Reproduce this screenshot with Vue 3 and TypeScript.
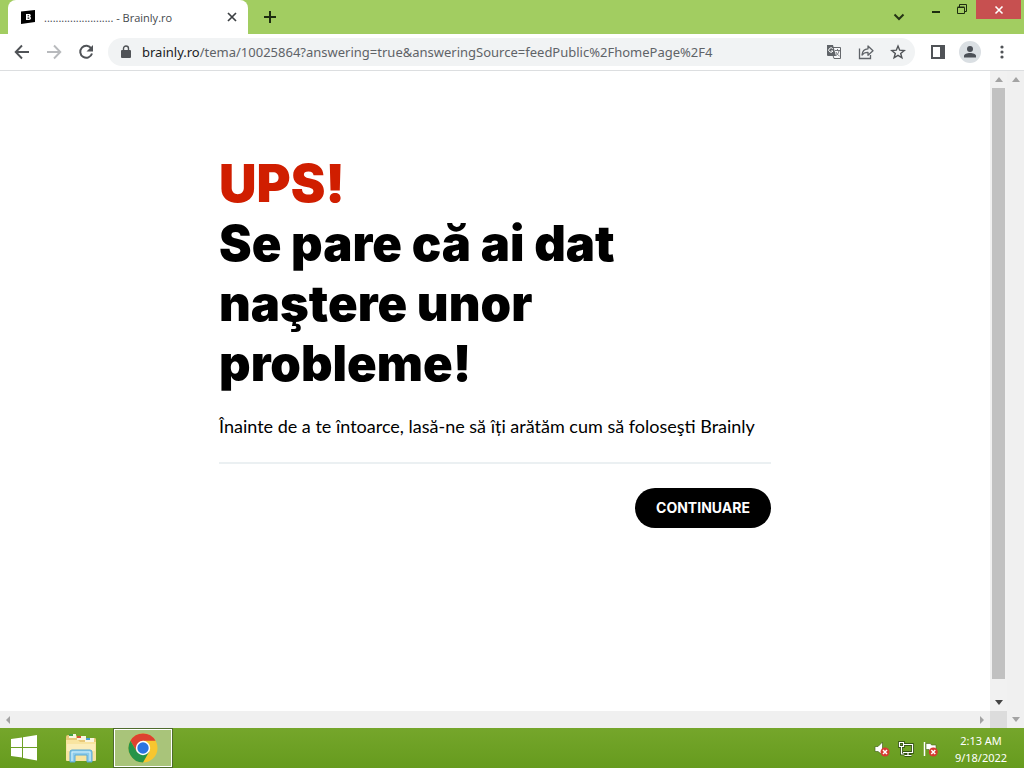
<script setup lang="ts">
import { ref } from 'vue'

const host = 'brainly.ro'
const path = '/tema/10025864?answering=true&answeringSource=feedPublic%2FhomePage%2F4'
const tabTitle = ref('........................ - Brainly.ro')
const time = '2:13 AM'
const date = '9/18/2022'
</script>

<template>
  <div class="desktop">
    <header class="tabstrip">
      <div class="tab">
        <svg class="favicon" viewBox="0 0 16 16"><path d="M1 2.500 15 1v12L1 15z" fill="#000" /><path d="M6 5h3.200c2 0 2 2.400.7 2.800 1.700.4 1.500 3.200-.8 3.200H6zm1.600 1.200v1.100h1c.8 0 .8-1.100 0-1.100zm0 2.300v1.300h1.200c.9 0 .9-1.300 0-1.300z" fill="#fff" fill-rule="evenodd" /></svg>
        <span class="tab-title">{{ tabTitle }}</span>
        <button class="icon-btn tab-close" aria-label="Close tab">
          <svg width="10" height="10" viewBox="0 0 10 10"><path d="M1 1l8 8M9 1L1 9" stroke="#3c4043" stroke-width="1.700" /></svg>
        </button>
      </div>
      <button class="icon-btn new-tab" aria-label="New tab">
        <svg width="12" height="12" viewBox="0 0 12 12"><path d="M6 0v12M0 6h12" stroke="#1d2c10" stroke-width="2" /></svg>
      </button>
      <div class="window-controls">
        <button class="icon-btn chevron" aria-label="Search tabs">
          <svg width="12" height="8" viewBox="0 0 12 8"><path d="M1.500 1.500 6 6l4.500-4.500" stroke="#253415" stroke-width="2" fill="none" /></svg>
        </button>
        <button class="icon-btn win" aria-label="Minimize">
          <svg width="10" height="12" viewBox="0 0 10 12"><path d="M1 8h8" stroke="#1d2c10" stroke-width="2" /></svg>
        </button>
        <button class="icon-btn win" aria-label="Restore">
          <svg width="10" height="12" viewBox="0 0 10 12"><path d="M.5 3.500h7v6h-7zM.5 3h7M2.500 3V.5h7v7H8" stroke="#1d2c10" fill="none" /></svg>
        </button>
        <button class="icon-btn win close" aria-label="Close">
          <svg width="10" height="10" viewBox="0 0 10 10"><path d="M1.500 1.500l7 7M8.500 1.500l-7 7" stroke="#fff" stroke-width="1.600" /></svg>
        </button>
      </div>
    </header>

    <nav class="toolbar">
      <button class="icon-btn nav" aria-label="Back">
        <svg width="16" height="16" viewBox="0 0 16 16"><path d="M15 8H2M8 1.500 1.700 8 8 14.500" stroke="#505357" stroke-width="1.900" fill="none" /></svg>
      </button>
      <button class="icon-btn nav" aria-label="Forward">
        <svg width="16" height="16" viewBox="0 0 16 16"><path d="M1 8h13M8 1.500 14.300 8 8 14.500" stroke="#b8babd" stroke-width="1.900" fill="none" /></svg>
      </button>
      <button class="icon-btn nav" aria-label="Reload">
        <svg width="16" height="16" viewBox="0 0 16 16"><path d="M13.300 4.500A6 6 0 1 0 14 9.500" stroke="#505357" stroke-width="2" fill="none" /><path d="M15 1v6.500H8.500z" fill="#505357" /></svg>
      </button>
      <div class="address">
        <svg class="lock" width="10" height="14" viewBox="0 0 10 14"><rect y="5" width="10" height="8" rx="1" fill="#505357" /><path d="M2.500 6V3.500a2.500 2.500 0 0 1 5 0V6" stroke="#505357" stroke-width="1.400" fill="none" /></svg>
        <a class="url" href="#"><span class="host">{{ host }}</span>{{ path }}</a>
        <div class="page-actions">
          <button class="icon-btn" aria-label="Translate">
            <svg width="16" height="16" viewBox="0 0 16 16"><path d="M7 3.500h7.500v11H8l-1-3" fill="#f6f7f9" stroke="#65686c" /><path d="M1 1h6l3 11H2a1 1 0 0 1-1-1z" fill="#5f6368" /><path d="M6.800 4.800A2.200 2.200 0 1 0 7 7H5" stroke="#fff" fill="none" /><path d="M9 6.500h5M11.500 5v1.500M10 8c.7 2 2 3 3.500 4M13 7c-.5 2-1.500 3.500-3 4.500" stroke="#74777b" fill="none" /></svg>
          </button>
          <button class="icon-btn" aria-label="Share">
            <svg width="16" height="16" viewBox="0 0 16 16"><path d="M1.500 4.500v10h11V11" stroke="#5f6368" stroke-width="1.300" fill="none" /><path d="M4 11c.3-4 2-6 6-6.200V2l5 4.700-5 4.500V8.300C7.500 8.200 5.500 9 4 11z" stroke="#5f6368" stroke-width="1.300" fill="none" stroke-linejoin="round" /></svg>
          </button>
          <button class="icon-btn" aria-label="Bookmark">
            <svg width="16" height="16" viewBox="0 0 16 16"><path d="m8 2 1.700 4.200 4.500.3-3.500 2.900 1.200 4.400L8 11.300l-3.900 2.500 1.200-4.400L1.800 6.500l4.500-.3z" stroke="#505357" stroke-width="1.400" fill="none" /></svg>
          </button>
        </div>
      </div>
      <div class="browser-actions">
        <button class="icon-btn" aria-label="Side panel">
          <svg width="14" height="14" viewBox="0 0 14 14"><path d="M0 0h14v14H0zm2 2v10h7V2z" fill="#505357" fill-rule="evenodd" /></svg>
        </button>
        <button class="icon-btn avatar" aria-label="Profile">
          <svg width="14" height="14" viewBox="0 0 14 14"><circle cx="7" cy="4" r="3" fill="#4b5057" /><path d="M1 12.500V11c0-2 3-3 6-3s6 1 6 3v1.500z" fill="#4b5057" /></svg>
        </button>
        <button class="icon-btn menu" aria-label="Menu">
          <svg width="4" height="14" viewBox="0 0 4 14"><g fill="#505357"><circle cx="2" cy="2" r="1.600" /><circle cx="2" cy="7" r="1.600" /><circle cx="2" cy="12" r="1.600" /></g></svg>
        </button>
      </div>
    </nav>

    <div class="viewport">
      <div class="page-column">
        <main class="page">
          <section class="notice">
            <h1><span class="ups">UPS!</span>Se pare că ai dat naştere unor probleme!</h1>
            <p>Înainte de a te întoarce, lasă-ne să îți arătăm cum să foloseşti Brainly</p>
            <hr />
            <div class="actions"><button class="continue">CONTINUARE</button></div>
          </section>
        </main>
        <div class="hscroll">
          <svg width="6" height="8" viewBox="0 0 6 8"><path d="M5 0v8L1 4z" fill="#a3a3a3" /></svg>
          <svg width="6" height="8" viewBox="0 0 6 8"><path d="M1 0v8l4-4z" fill="#a3a3a3" /></svg>
        </div>
      </div>
      <div class="vscroll inner">
        <svg width="8" height="5" viewBox="0 0 8 5"><path d="M0 5h8L4 0z" fill="#a3a3a3" /></svg>
        <div class="thumb"></div>
        <svg width="8" height="5" viewBox="0 0 8 5"><path d="M0 0h8L4 5z" fill="#444" /></svg>
        <div class="corner"></div>
      </div>
      <div class="vscroll outer">
        <svg width="8" height="5" viewBox="0 0 8 5"><path d="M0 5h8L4 0z" fill="#a3a3a3" /></svg>
        <svg width="8" height="5" viewBox="0 0 8 5"><path d="M0 0h8L4 5z" fill="#a3a3a3" /></svg>
      </div>
    </div>

    <footer class="taskbar">
      <button class="icon-btn task" aria-label="Start">
        <svg width="26" height="26" viewBox="0 0 26 26"><path d="M0 4 11 2.500V12H0zM12 2.300 26 0v12H12zM0 13h11v9.500L0 21zM12 13h14v12.500L12 23z" fill="#fff" /></svg>
      </button>
      <button class="icon-btn task" aria-label="File Explorer">
        <svg width="32" height="32" viewBox="0 0 32 32"><path d="M1 5q0-2 2-2h8l2 3h17q1 0 1 2v19H1z" fill="#e9c979" /><path d="M4 2h7v4H4z" fill="#f8f7df" /><path d="M4 2h4v2H4z" fill="#47a345" /><path d="M12 4h9v4h-9z" fill="#faf5df" /><path d="M12 4h4v2h-4z" fill="#d65332" /><path d="M20 6h9v4h-9z" fill="#faf5df" /><path d="M21 6h4v2h-4z" fill="#4a9ed0" /><path d="M1 8h12l2 2h16v18q0 1-1 1H2q-1 0-1-1z" fill="#f8e4a0" /><path d="M2 12h28v7H2z" fill="#fbedbb" /><path d="M5 30V20q0-2 2-2h18q2 0 2 2v10h-5v-7H10v7z" fill="#8ccbea" stroke="#5aa9d3" /><path d="M7 29v-9h18v9" fill="none" stroke="#d7f2fb" /></svg>
      </button>
      <button class="icon-btn task active" aria-label="Google Chrome">
        <svg width="30" height="30" viewBox="0 0 30 30"><circle cx="15" cy="15" r="14.500" fill="#f7c62f" /><path d="M2.440 7.750A14.500 14.500 0 0 1 27.560 7.750H15L8.700 18.600z" fill="#dd4130" /><path d="M2.440 7.750A14.500 14.500 0 0 0 15 29.500L21.280 18.620 15 22 8.720 18.620z" fill="#259449" /><circle cx="15" cy="15" r="7.200" fill="#fff" /><circle cx="15" cy="15" r="5.700" fill="#2b74e2" /></svg>
      </button>
      <div class="tray">
        <svg width="16" height="16" viewBox="0 0 16 16"><path d="M1 5.500h3L8.500 1v13L4 10.500H1z" fill="#fff" stroke="#47651f" stroke-width=".7" /><circle cx="11" cy="11" r="4.500" fill="#d63b31" /><path d="m9 9 4 4m0-4-4 4" stroke="#fff" stroke-width="1.500" /></svg>
        <svg width="16" height="16" viewBox="0 0 16 16"><path d="M5 3.500h9.500v8H5M10 12v2.500M6.500 14.500h7M1.500 1.500h4v4h-4zM3.500 6v7H6" stroke="#26400f" stroke-width="2.600" fill="none" /><path d="M5 3.500h9.500v8H5M10 12v2.500M6.500 14.500h7M1.500 1.500h4v4h-4zM3.500 6v7H6" stroke="#fff" stroke-width="1.200" fill="none" /></svg>
        <svg width="16" height="16" viewBox="0 0 16 16"><path d="M2.500 1v14" stroke="#fff" stroke-width="1.500" /><path d="M4 2.500h4.500l1 1.500H14v6H8L7 8.500H4z" fill="#fff" stroke="#47651f" stroke-width=".6" /><circle cx="11.300" cy="11" r="4.500" fill="#d63b31" /><path d="m9.300 9 4 4m0-4-4 4" stroke="#fff" stroke-width="1.500" /></svg>
      </div>
      <div class="clock"><span>{{ time }}</span><span>{{ date }}</span></div>
    </footer>
  </div>
</template>

<style>
body { margin: 0; }
</style>

<style scoped>
.desktop { display: flex; flex-direction: column; height: 100vh; overflow: hidden; background: #fff; font-family: "Noto Sans", "Open Sans", sans-serif; }
.desktop *, .desktop { box-sizing: border-box; }
svg { display: block; flex: none; }
.icon-btn { display: flex; align-items: center; justify-content: center; padding: 0; border: 0; background: none; flex: none; }
.tabstrip { display: flex; flex: none; height: 34px; padding: 0 3px 0 8px; background: #a2cd61; }
.tab { display: flex; align-items: center; width: 240px; padding: 0 10px 0 12px; background: #fff; border-radius: 8px 8px 0 0; }
.favicon { width: 16px; height: 16px; }
.tab-title { flex: 1; margin-left: 8px; font-family: "Open Sans", sans-serif; font-size: 11px; color: #45494d; white-space: nowrap; }
.tab-close { width: 12px; height: 16px; }
.new-tab { width: 44px; }
.window-controls { display: flex; align-items: flex-start; margin-left: auto; }
.chevron { width: 26px; height: 34px; margin-right: 11px; }
.win { width: 26px; height: 19px; }
.close { width: 45px; margin-left: 1px; background: #c75050; }
.toolbar { display: flex; flex: none; align-items: center; height: 37px; padding: 0 8px; border-bottom: 1px solid #dcdee0; }
.nav { width: 32px; height: 28px; }
.nav:first-child { width: 28px; margin-right: 2px; }
.address { display: flex; align-items: center; flex: 1; min-width: 0; height: 28px; margin-left: 6px; padding: 0 9px 0 13px; border-radius: 14px; background: #f1f3f4; }
.url { flex: 1; margin-left: 11px; overflow: hidden; font-size: 13px; line-height: 20px; color: #5f6368; text-decoration: none; white-space: nowrap; }
.host { color: #202124; }
.page-actions { display: flex; gap: 16px; }
.browser-actions { display: flex; align-items: center; gap: 14px; margin: 0 12px 0 16px; }
.avatar { width: 22px; height: 22px; border-radius: 50%; background: #dadfe3; }
.menu { margin-left: 5px; }
.viewport { display: flex; flex: 1; min-height: 0; }
.page-column { display: flex; flex-direction: column; flex: 1; min-width: 0; }
.page { flex: 1; padding: 83px 219px 0; min-height: 0; }
.notice { max-width: 552px; color: #000; font-family: Inter, sans-serif; }
h1 { max-width: 440px; margin: 0; font-size: 49px; line-height: 60px; font-weight: 900; }
.ups { display: block; color: #d01e00; font-size: 52px; }
p { margin: 20px 0 0; font-family: Lato, sans-serif; font-size: 18px; font-weight: 400; line-height: 24px; white-space: nowrap; }
hr { height: 2px; margin: 24px 0 0; border: 0; background: #ebf0f2; }
.actions { display: flex; justify-content: flex-end; margin-top: 24px; }
.continue { width: 136px; height: 40px; padding: 0; border: 0; border-radius: 20px; background: #000; color: #fff; font: 700 14px/20px Inter, sans-serif; }
.hscroll { display: flex; flex: none; align-items: center; justify-content: space-between; height: 17px; padding: 0 5px; background: #f0f0f0; }
.vscroll { display: flex; flex: none; flex-direction: column; align-items: center; width: 17px; padding-top: 6px; background: #f0f0f0; }
.inner { gap: 6px; background: #f1f1f1; }
.thumb { flex: 1; width: 13px; margin-bottom: 15px; background: #c1c1c1; }
.corner { width: 17px; height: 17px; background: #dcdcdc; }
.outer { justify-content: space-between; padding-bottom: 6px; }
.taskbar { display: flex; flex: none; align-items: center; height: 40px; background: linear-gradient(#75a62b, #669b1e); }
.task { width: 48px; height: 40px; }
.task:nth-child(2) { width: 66px; }
.active { width: 58px; height: 38px; border: 1px solid #fff; outline: 1px solid #4e6b2c; background: #a9c47a; }
.tray { display: flex; gap: 8px; margin-left: auto; padding-top: 2px; }
.clock { display: flex; flex-direction: column; width: 86px; padding-top: 2px; align-items: center; font-size: 11px; line-height: 17px; color: #fff; }
</style>
